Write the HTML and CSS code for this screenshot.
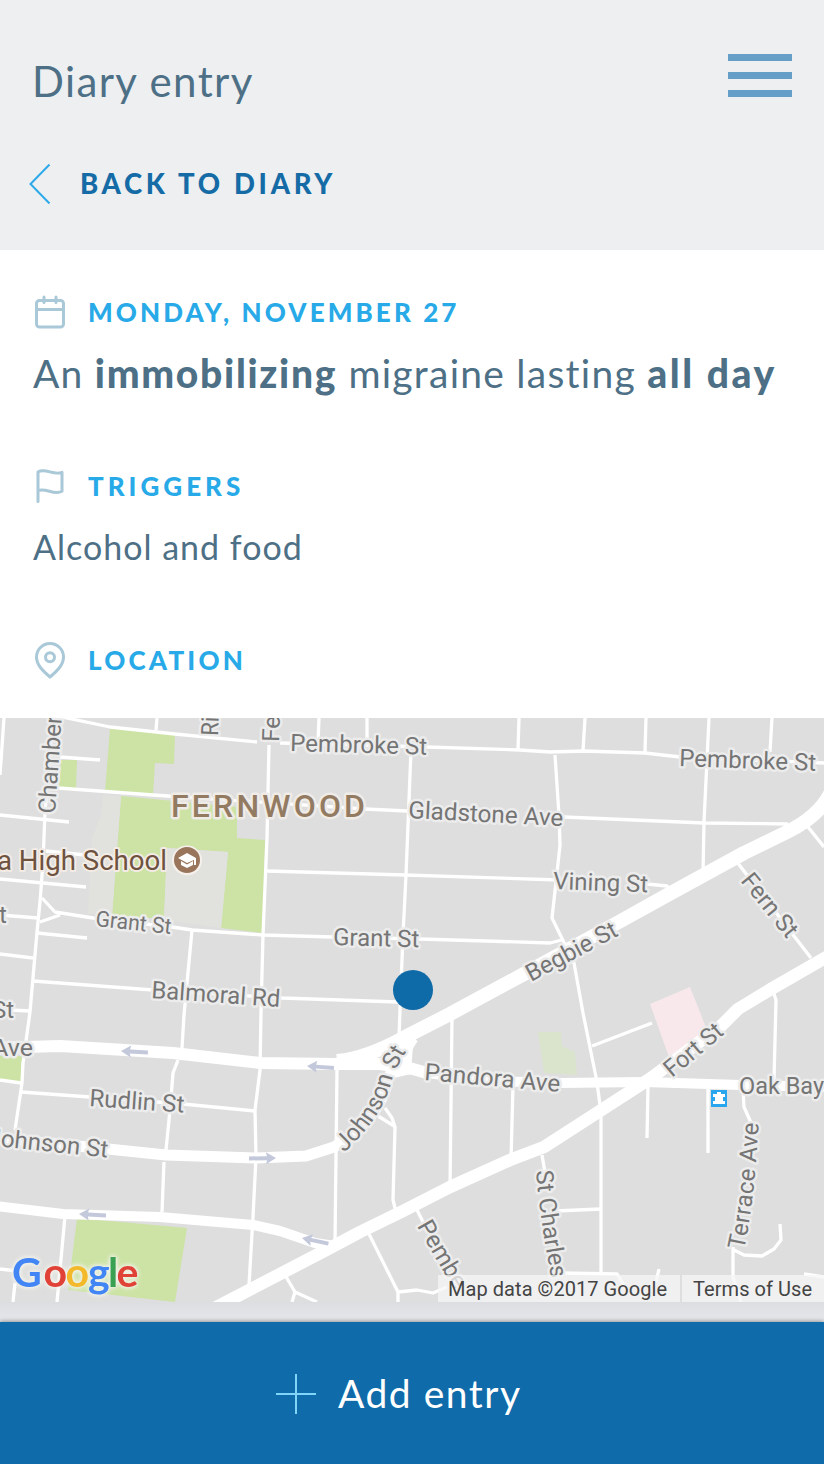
FILE: index.html
```
<!DOCTYPE html>
<html lang="en">
<head>
  <meta charset="UTF-8" />
  <meta name="viewport" content="width=device-width, initial-scale=1.0" />
  <title>Diary entry</title>
  <link rel="stylesheet" href="styles.css">
</head>
<body>
  <header class="header">
    <div class="title-row">
      <h1>Diary entry</h1>
      <div class="menu"><span></span><span></span><span></span></div>
    </div>
    <a class="back">
      <svg width="22" height="40" viewBox="0 0 22 40"><path d="M20.500 .5L1.500 20L20.500 39.500" /></svg>
      <span>BACK TO DIARY</span>
    </a>
  </header>

  <main>
    <section class="entry">
      <h2>
        <svg class="icon" width="34" height="38" viewBox="0 0 34 38">
          <rect x="3.500" y="7.500" width="27" height="26.500" rx="3" />
          <path d="M3.500 16.500h27M11 4v5.500M23 4v5.500" />
        </svg>
        <span class="label-date">MONDAY, NOVEMBER 27</span>
      </h2>
      <p class="summary"><span class="light">An </span><strong>immobilizing</strong><span class="light"> migraine lasting </span><strong class="length">all day</strong></p>
    </section>

    <section class="entry">
      <h2>
        <svg class="icon" width="34" height="38" viewBox="0 0 34 38">
          <path d="M5 34.500V5c7-4.500 16 4 24 .3v19c-8 4.500-16-4-24-.8" />
        </svg>
        <span class="label-triggers">TRIGGERS</span>
      </h2>
      <p class="triggers">Alcohol and food</p>
    </section>

    <section class="entry">
      <h2>
        <svg class="icon" width="34" height="38" viewBox="0 0 34 38">
          <path d="M17 36C10 30 3.500 24 3.500 16a13.500 13.500 0 0 1 27 0C30.500 24 24 30 17 36z" />
          <circle cx="17" cy="16.300" r="4.500" />
        </svg>
        <span class="label-location">LOCATION</span>
      </h2>
    </section>

    <div class="map">
      <svg width="824" height="584" viewBox="0 718 824 584">
        <!-- parks and grounds -->
        <g class="park">
          <path d="M110 728L175 734L174 764L155 763L153 795L105 791z" />
          <path d="M61 760H77L76 789L59 788z" />
          <path d="M121 796L237 807V838L265 840L263 933L221 928L228 852L167 848L164 919L112 915z" />
          <path d="M0 1056H22L21 1082L0 1079z" />
          <path d="M77 1218L187 1228L175 1302L113 1295L68 1290z" />
        </g>
        <path class="school-ground" d="M103 795L121 796L112 915L88 914L92 838L101 815zM167 848L228 852L221 928L164 920z" />
        <path class="garden" d="M538 1032H561L562 1046L575 1052L577 1075L544 1073z" />
        <path class="hospital" d="M650 1004L690 987L709 1035L669 1057z" />

        <!-- side streets -->
        <g class="street">
          <path d="M4 718L0 775M48 714L110 727L175 734L257 742M280 743L427 747L520 750L550 752L584 751L645 753L680 757L824 763" />
          <path d="M157 718L156 730M53 718L45 812L43 862L40 902L37 932L30 1012L23 1063L22 1083L15 1130" />
          <path d="M60 757L100 760M58 788L153 795L365 809L407 811M564 817L704 823L788 824" />
          <path d="M0 815L69 822M46 851L85 855M0 879L86 887" />
          <path d="M42 898L55 912L93 918L172 927L192 930L263 935L333 937L420 939L550 943L562 940M60 915L40 922M0 915L38 918" />
          <path d="M37 933L87 938M0 954L33 958M33 981L153 990L282 998L398 1002M10 1010L30 1011" />
          <path d="M192 930L184 1015L182 1048M178 1060L173 1073L170 1110L166 1150M164 1162L162 1212" />
          <path d="M269 745L267 838L263 935L261 1012L260 1070L255 1110L256 1157L253 1217L249 1285" />
          <path d="M267 871L405 875L560 880M647 884L667 886L673 893" />
          <path d="M319 718L318 742M367 718L367 742M519 718L518 750M585 718L583 751M646 718L645 752M709 718L704 822L703 873M772 718L770 752" />
          <path d="M411 750L406 875L403 935L400 1010L399 1037" />
          <path d="M555 755L559 815L560 845L556 882L552 918L574 963L583 1013L596 1077L598 1090L601 1113V1272" />
          <path d="M337 1070L335 1242M452 1018L450 1187M513 1085L511 1160M417 1210L423 1222L450 1268" />
          <path d="M385 1108L392 1118L395 1127L393 1200L396 1212M378 1116L394 1126" />
          <path d="M368 1232L398 1292L417 1290L433 1293L447 1287M398 1292V1302M285 1275L295 1292L292 1302M295 1292L317 1302" />
          <path d="M542 1155L548 1190M592 1046L652 1023M555 1211L601 1209M560 1273L617 1274L624 1285M659 1269L656 1282" />
          <path d="M648 1086L647 1138M708 1088V1153M743 1090L744 1107L752 1125M772 988L776 1000L774 1080" />
          <path d="M733 1247V1277L741 1302M734 1250L744 1255L762 1256L774 1249L781 1240L780 1224M804 1274L824 1277" />
          <path d="M737 862L811 958M808 827L824 847" />
          <path d="M0 1080L21 1083M21 1092L90 1097L183 1104L255 1111M65 1216L57 1302M0 1269L17 1271M15 1283L13 1302" />
        </g>

        <!-- main roads -->
        <g class="road">
          <path stroke-width="14" d="M830 794Q818 817 787 832L744 853L671 893L617 923L524 974L450 1014L403 1038Q367 1058 337 1061" />
          <path stroke-width="12.500" d="M830 955L771 989L738 1009L721 1026L651 1078L544 1147L510 1160L450 1187L403 1211L360 1232L330 1248L205 1313" />
          <path stroke-width="12" d="M-5 1048L60 1046L173 1053L260 1063L337 1064L380 1064L413 1069L427 1073" />
          <path stroke-width="10" d="M420 1072L490 1081L560 1083L644 1082L741 1085L830 1087" />
          <path stroke-width="11" d="M-5 1138L108 1149L166 1155L256 1158L306 1156L334 1147Q382 1118 388 1078L413 1038" />
          <path stroke-width="10" d="M-5 1206L63 1214L160 1217L253 1225L280 1231L315 1243L335 1246" />
        </g>
        <path class="junction" d="M398 1040L420 1032L413 1045L411 1074L394 1078L385 1060z" />

        <!-- one way arrows -->
        <g class="arrow">
          <path transform="translate(121 1051) rotate(3)" d="M0 0L10 -6L9 -2H27V2H9L10 6z" />
          <path transform="translate(307 1066) rotate(4)" d="M0 0L10 -6L9 -2H27V2H9L10 6z" />
          <path transform="translate(276 1158) rotate(179)" d="M0 0L10 -6L9 -2H27V2H9L10 6z" />
          <path transform="translate(79 1214) rotate(3)" d="M0 0L10 -6L9 -2H27V2H9L10 6z" />
          <path transform="translate(302 1238) rotate(12)" d="M0 0L10 -6L9 -2H27V2H9L10 6z" />
        </g>

        <defs>
          <path id="johnson" d="M344 1153Q383 1116 391 1083Q395 1068 411 1044" />
          <path id="charles" d="M536 1171Q540 1220 552 1282" />
          <path id="terrace" d="M744 1250Q755 1200 759 1115" />
          <path id="pemb" d="M417 1226Q436 1260 460 1299" />
        </defs>

        <!-- street names -->
        <g class="names">
          <text transform="translate(55 814) rotate(-86)" textLength="98" lengthAdjust="spacingAndGlyphs">Chamber</text>
          <text transform="translate(218 736) rotate(-88)" textLength="19" lengthAdjust="spacingAndGlyphs">Ri</text>
          <text transform="translate(279 742) rotate(-88)">Fe</text>
          <text transform="translate(290 751) rotate(1.500)" textLength="137" lengthAdjust="spacingAndGlyphs">Pembroke St</text>
          <text transform="translate(679 766) rotate(2)" textLength="137" lengthAdjust="spacingAndGlyphs">Pembroke St</text>
          <text transform="translate(408 818) rotate(3)" textLength="155" lengthAdjust="spacingAndGlyphs">Gladstone Ave</text>
          <text transform="translate(553 889) rotate(2)" textLength="95" lengthAdjust="spacingAndGlyphs">Vining St</text>
          <text class="minor" transform="translate(95 926) rotate(6)" textLength="76" lengthAdjust="spacingAndGlyphs">Grant St</text>
          <text transform="translate(333 945) rotate(1.500)" textLength="86" lengthAdjust="spacingAndGlyphs">Grant St</text>
          <text transform="translate(151 998) rotate(4)" textLength="129" lengthAdjust="spacingAndGlyphs">Balmoral Rd</text>
          <text transform="translate(531 982) rotate(-28)" textLength="100" lengthAdjust="spacingAndGlyphs">Begbie St</text>
          <text transform="translate(740 881) rotate(51)" textLength="75" lengthAdjust="spacingAndGlyphs">Fern St</text>
          <text transform="translate(672 1078) rotate(-40)" textLength="69" lengthAdjust="spacingAndGlyphs">Fort St</text>
          <text transform="translate(424 1080) rotate(5)" textLength="136" lengthAdjust="spacingAndGlyphs">Pandora Ave</text>
          <text x="739" y="1094" textLength="85" lengthAdjust="spacingAndGlyphs">Oak Bay</text>
          <text transform="translate(89 1106) rotate(4)" textLength="95" lengthAdjust="spacingAndGlyphs">Rudlin St</text>
          <text transform="translate(-13 1145) rotate(6)" textLength="121" lengthAdjust="spacingAndGlyphs">Johnson St</text>
          <text x="-1" y="923">t</text>
          <text x="-8" y="1018">St</text>
          <text x="-8" y="1056" textLength="41" lengthAdjust="spacingAndGlyphs">Ave</text>
          <text><textPath href="#johnson">Johnson St</textPath></text>
          <text><textPath href="#charles">St Charles</textPath></text>
          <text><textPath href="#terrace" textLength="128">Terrace Ave</textPath></text>
          <text><textPath href="#pemb">Pembe</textPath></text>
        </g>

        <text class="district" x="171" y="817" textLength="194">FERNWOOD</text>
        <text class="school" x="-3" y="870" textLength="170" lengthAdjust="spacingAndGlyphs">a High School</text>
        <g>
          <circle cx="187" cy="860.500" r="15" fill="#f5f0ec" />
          <circle cx="187" cy="860" r="13" fill="#98755b" />
          <path fill="#fff" d="M187 853L196 858V865H194V860L187 863L178 858zM181 861L187 864.500L193 861V865L187 868L181 865z" />
        </g>

        <!-- bus stop -->
        <rect x="711" y="1090" width="16" height="17" fill="#29a6ee" />
        <path fill="#fff" d="M717 1092H721V1094H725V1097H723V1101H725V1104H713V1101H715V1097H713V1094H717z" />

        <circle cx="413" cy="990" r="20" fill="#0f6aa8" />

        <text class="google" y="1287"><tspan x="12" fill="#4285f4">G</tspan><tspan x="43.500" fill="#e04238">o</tspan><tspan x="65.500" fill="#f4b92a">o</tspan><tspan x="88" fill="#4285f4">g</tspan><tspan x="108" fill="#3aa052">l</tspan><tspan x="116.500" fill="#e04238">e</tspan></text>
      </svg>
      <div class="credits">
        <span class="data">Map data ©2017 Google</span>
        <span class="terms">Terms of Use</span>
      </div>
    </div>
  </main>

  <footer class="add">
    <svg width="40" height="40" viewBox="0 0 40 40"><path d="M20 0V40M0 20H40" /></svg>
    <span>Add entry</span>
  </footer>
</body>
</html>
```
FILE: styles.css
```
* {
  box-sizing: border-box;
}
body {
  margin: 0;
  width: 824px;
  height: 1464px;
  overflow: hidden;
  font-family: Lato, sans-serif;
  font-variant-ligatures: none;
  color: #4d7086;
  background: #fff;
}
h1, h2, p {
  margin: 0;
  font-weight: 400;
  white-space: nowrap;
}
.header {
  height: 250px;
  background: #edeff1;
}
.title-row {
  display: flex;
  justify-content: space-between;
  padding: 54px 32px 0 32px;
}
h1 {
  font-size: 42px;
  line-height: 54px;
  letter-spacing: 1.400px;
}
.menu {
  display: flex;
  flex-direction: column;
  gap: 11px;
}
.menu span {
  width: 64px;
  height: 7px;
  background: #659fc7;
}
.back {
  display: flex;
  align-items: center;
  gap: 29px;
  height: 40px;
  margin-top: 56px;
  padding-left: 29px;
  font-size: 27.5px;
  font-weight: 900;
  line-height: 40px;
  letter-spacing: 3.700px;
  color: #146ba5;
}
.back svg {
  fill: none;
  stroke: #2ba9ea;
  stroke-width: 2;
}
.entry {
  height: 174px;
  padding: 43px 0 0 33px;
}
.entry:nth-child(3) {
  height: 120px;
}
h2 {
  display: flex;
  align-items: center;
  gap: 21px;
  height: 38px;
  font-size: 26px;
  font-weight: 900;
  color: #28aae8;
}
.label-date {
  letter-spacing: 3.100px;
}
.label-triggers {
  letter-spacing: 4px;
}
.label-location {
  letter-spacing: 3.200px;
}
.icon {
  fill: none;
  stroke: #a9c8d8;
  stroke-width: 3;
  stroke-linecap: round;
  stroke-linejoin: round;
}
.summary {
  margin-top: 18px;
  font-size: 39px;
  line-height: 48px;
  white-space: pre;
}
.summary .light {
  letter-spacing: 1.250px;
}
.summary strong {
  font-weight: 900;
  letter-spacing: 1.700px;
}
.summary .length {
  letter-spacing: 2.600px;
}
.triggers {
  margin-top: 20px;
  font-size: 34px;
  line-height: 44px;
  letter-spacing: 1px;
}
.map {
  position: relative;
  height: 584px;
  overflow: hidden;
  background: #dedede;
}
.map svg {
  display: block;
}
.map text {
  font-family: Roboto, sans-serif;
  paint-order: stroke;
  stroke-linejoin: round;
}
.park {
  fill: #cce3a5;
}
.school-ground {
  fill: #e1e2dd;
}
.garden {
  fill: #dae4cd;
}
.hospital {
  fill: #f8e8ec;
}
.street, .road {
  fill: none;
  stroke: #fff;
  stroke-linejoin: round;
}
.street {
  stroke-width: 3.3;
}
.junction {
  fill: #fff;
}
.arrow {
  fill: #c3c8db;
}
.names text {
  font-size: 24px;
  fill: #757575;
  stroke: #ececec;
  stroke-width: 5px;
}
.names .minor {
  font-size: 22px;
}
.map .district {
  font-size: 32px;
  font-weight: 500;
  fill: #937b62;
  stroke: #efebe7;
  stroke-width: 5px;
}
.map .school {
  font-size: 28px;
  fill: #6e5240;
  stroke: #f3ebe5;
  stroke-width: 4px;
}
.map .google {
  font-family: Lato, sans-serif;
  font-size: 41px;
  font-weight: 700;
  filter: drop-shadow(0 0 2px #f2f2ec) drop-shadow(0 0 2px #f2f2ec);
}
.credits {
  position: absolute;
  right: 0;
  bottom: 0;
  display: flex;
  gap: 2px;
  font-family: Roboto, sans-serif;
  font-size: 20px;
  line-height: 29px;
  letter-spacing: 0.060px;
  color: #444;
}
.credits span {
  height: 27px;
  background: rgba(245, 245, 245, 0.75);
  white-space: nowrap;
}
.data {
  width: 242px;
  padding-left: 10px;
}
.terms {
  width: 142px;
  padding-left: 11px;
}
main {
  height: 1072px;
  background: linear-gradient(#fff 1052px, #dcdde0 1052px, #e6e7ea);
}
.add {
  position: relative;
  display: flex;
  align-items: center;
  height: 142px;
  padding-left: 276px;
  gap: 22px;
  font-size: 39px;
  letter-spacing: 1.500px;
  color: #fff;
  background: #0f6ba9;
  box-shadow: 0 -1px 4px rgba(0, 0, 0, 0.35);
}
.add svg {
  margin-top: 2px;
  stroke: #7fd4f8;
  stroke-width: 2;
}
```
